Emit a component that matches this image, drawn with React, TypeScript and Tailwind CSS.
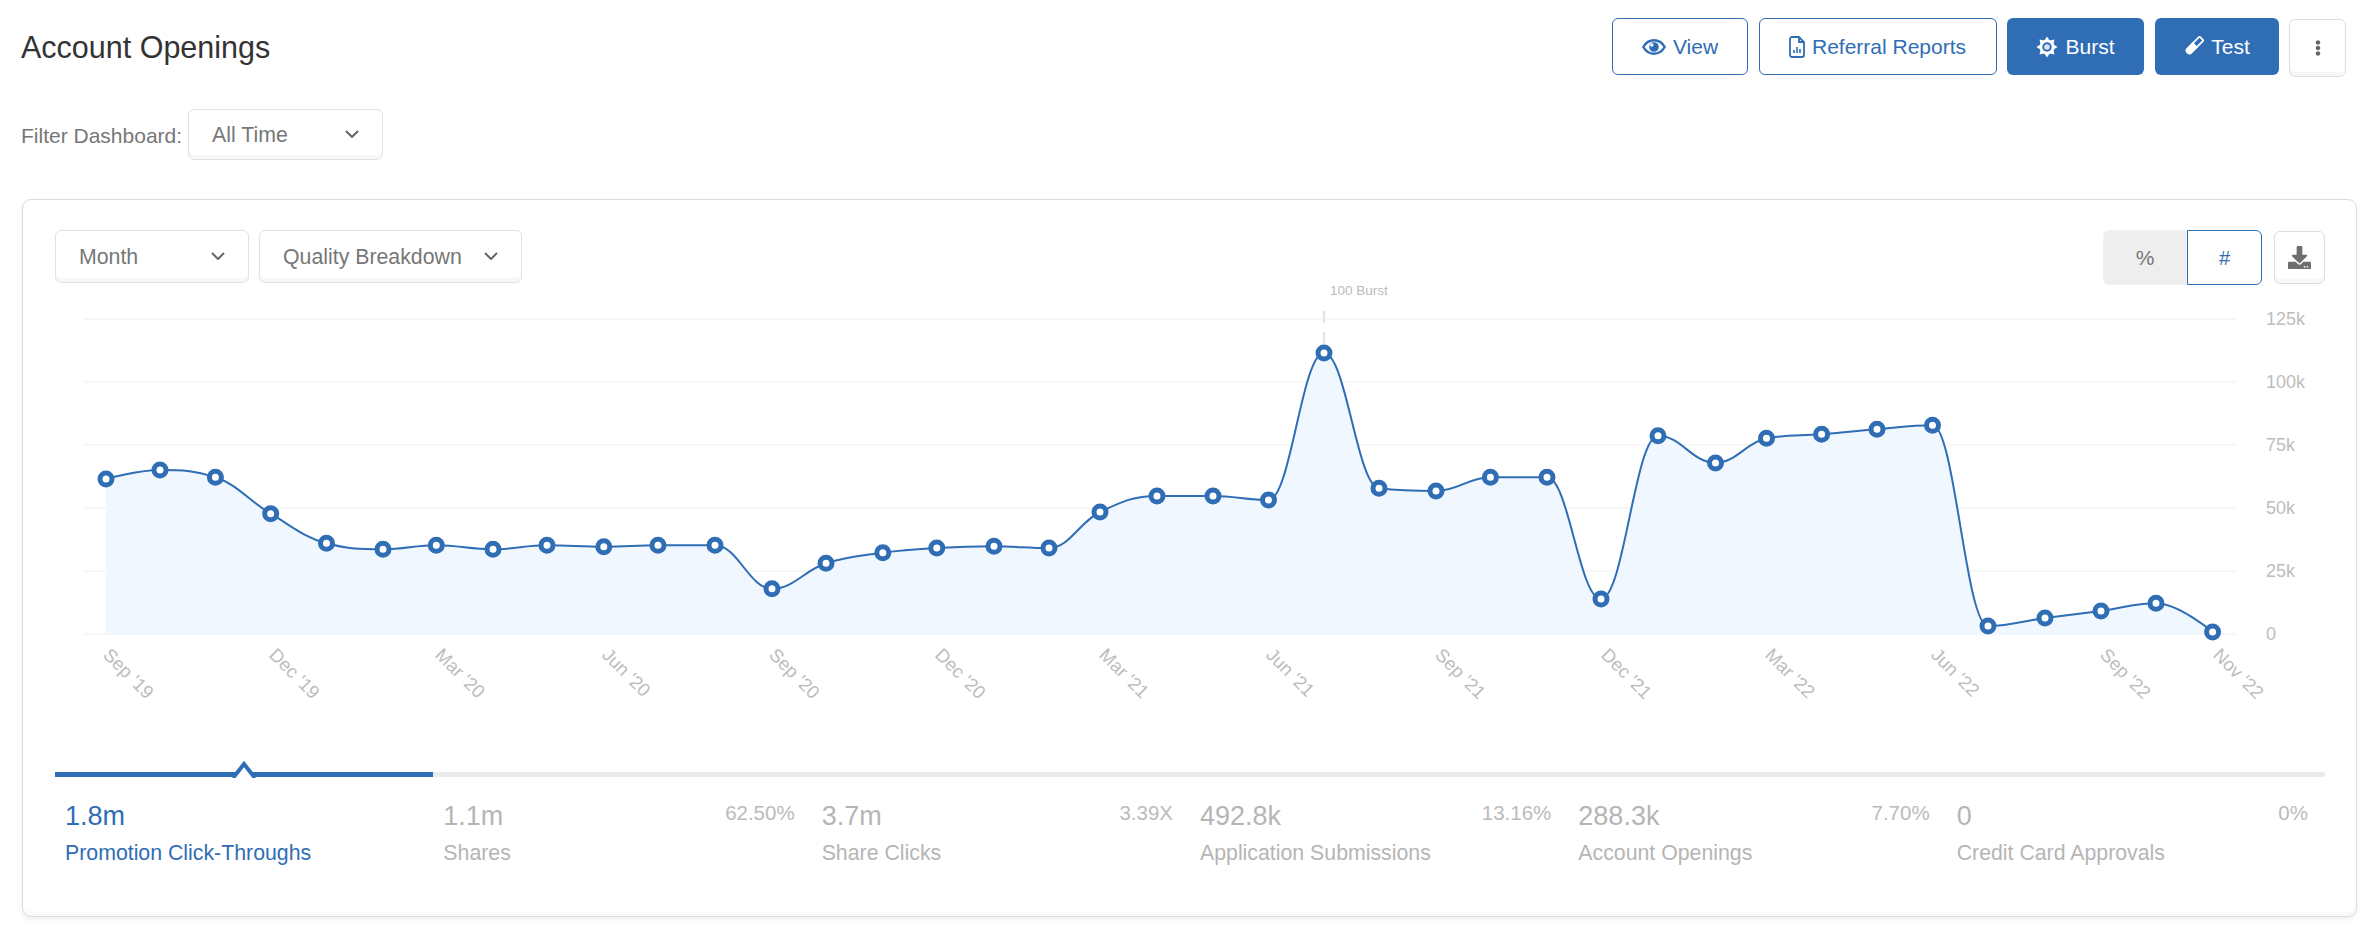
import { FaEllipsisV, FaDownload } from "react-icons/fa"

const BLUE = "#2f6db5"

const points: [number, number][] = [
    [106, 478], [160, 469], [215.4, 476.3], [270.7, 512.7], [326.5, 542.3], [383, 548.3],
    [436.3, 544.3], [493, 548.3], [547, 544.3], [603.8, 545.7], [658, 544.3], [715, 544.3],
    [772, 587.7], [826, 562.3], [882.8, 551.7], [936.8, 547], [994, 545.3], [1049, 547],
    [1100, 511], [1157, 495], [1213, 495], [1268.5, 499], [1324, 352], [1379, 487.3],
    [1436, 490], [1490.4, 476.3], [1547, 476.3], [1601, 598], [1658, 434.7], [1715.5, 462],
    [1766.5, 437.3], [1821.6, 433.3], [1877, 428.3], [1932.5, 424.3], [1988, 625], [2045, 617],
    [2101, 610], [2156, 602.3], [2212.6, 631],
]

const gridLines = [
    { y: 318, label: "125k" },
    { y: 381, label: "100k" },
    { y: 444, label: "75k" },
    { y: 507, label: "50k" },
    { y: 570, label: "25k" },
    { y: 633, label: "0" },
]

const xLabels: [number, string][] = [
    [102, "Sep '19"], [268, "Dec '19"], [434, "Mar '20"], [601, "Jun '20"], [768, "Sep '20"],
    [934, "Dec '20"], [1098, "Mar '21"], [1265, "Jun '21"], [1434, "Sep '21"], [1600, "Dec '21"],
    [1764, "Mar '22"], [1930, "Jun '22"], [2099, "Sep '22"], [2212, "Nov '22"],
]

const stats = [
    { value: "1.8m", label: "Promotion Click-Throughs", pct: "", active: true },
    { value: "1.1m", label: "Shares", pct: "62.50%" },
    { value: "3.7m", label: "Share Clicks", pct: "3.39X" },
    { value: "492.8k", label: "Application Submissions", pct: "13.16%" },
    { value: "288.3k", label: "Account Openings", pct: "7.70%" },
    { value: "0", label: "Credit Card Approvals", pct: "0%" },
]

const sunSpikes = [0, 45, 90, 135, 180, 225, 270, 315]

// same control point maths as a highcharts spline, clamps so peaks don't overshoot
function splinePath(pts: [number, number][]) {
    const s = 1.5
    const d = 2.5
    const conts = pts.map(([x, y], i) => {
        if (i === 0 || i === pts.length - 1) return { lx: x, ly: y, rx: x, ry: y }
        const [px, py] = pts[i - 1]
        const [nx, ny] = pts[i + 1]
        const lx = (s * x + px) / d
        let ly = (s * y + py) / d
        const rx = (s * x + nx) / d
        let ry = (s * y + ny) / d
        const c = ((ry - ly) * (rx - x)) / (rx - lx) + y - ry
        ly += c
        ry += c
        if (ly > py && ly > y) {
            ly = Math.max(py, y)
            ry = 2 * y - ly
        } else if (ly < py && ly < y) {
            ly = Math.min(py, y)
            ry = 2 * y - ly
        }
        if (ry > ny && ry > y) {
            ry = Math.max(ny, y)
            ly = 2 * y - ry
        } else if (ry < ny && ry < y) {
            ry = Math.min(ny, y)
            ly = 2 * y - ry
        }
        return { lx, ly, rx, ry }
    })
    let path = `M ${pts[0][0]} ${pts[0][1]}`
    for (let i = 1; i < pts.length; i++) {
        const a = conts[i - 1]
        const b = conts[i]
        path += ` C ${a.rx} ${a.ry} ${b.lx} ${b.ly} ${pts[i][0]} ${pts[i][1]}`
    }
    return path
}

function Chevron() {
    return (
        <svg viewBox="0 0 14 8" className="w-[14px] h-[8px] -mt-[2px]" fill="none" stroke="#666" strokeWidth="2">
            <path d="M1 1l6 6 6-6" />
        </svg>
    )
}

function Select({ label, className }: { label: string; className: string }) {
    return (
        <div className={`flex items-center justify-between bg-white border border-[#e2e2e2] rounded-[6px] shadow-[inset_0_-4px_0_#f7f7f7] pl-[23px] pr-[23px] text-[21.3px] text-[#777] ${className}`}>
            <span className="pt-[2px]">{label}</span>
            <Chevron />
        </div>
    )
}

function EyeIcon() {
    return (
        <svg viewBox="0 0 24 16" className="w-[24px] h-[16px]">
            <path d="M1.3 8C3.6 3.9 7.5 1.3 12 1.3S20.4 3.9 22.7 8C20.4 12.1 16.5 14.7 12 14.7S3.6 12.1 1.3 8z" fill="none" stroke={BLUE} strokeWidth="2.4" />
            <circle cx="12" cy="8" r="4.8" fill={BLUE} />
            <circle cx="9.8" cy="6" r="1.7" fill="#fff" />
        </svg>
    )
}

function ReportIcon() {
    return (
        <svg viewBox="0 0 16 22" className="w-[16px] h-[22px]" fill="none" stroke={BLUE} strokeWidth="1.8">
            <path d="M3 1h7l5 5v13a2 2 0 0 1-2 2H3a2 2 0 0 1-2-2V3a2 2 0 0 1 2-2z" />
            <path d="M10 1v5h5" />
            <path d="M5 17v-3M8 17v-6M11 17v-4" strokeWidth="1.6" />
        </svg>
    )
}

function SunIcon() {
    return (
        <svg viewBox="0 0 24 24" className="w-[22px] h-[22px]">
            {sunSpikes.map(a => (
                <path key={a} d="M12 0.5l3.2 5h-6.4z" fill="#fff" transform={`rotate(${a} 12 12)`} />
            ))}
            <circle cx="12" cy="12" r="8" fill="#fff" />
            <circle cx="12" cy="12" r="5.2" fill={BLUE} />
            <circle cx="12" cy="12" r="3" fill="#dbe6f3" />
        </svg>
    )
}

function TubeIcon() {
    return (
        <svg viewBox="0 0 24 24" className="w-[21px] h-[21px]">
            <g transform="rotate(45 12 12)">
                <path d="M8.5 -1h7" stroke="#fff" strokeWidth="2" />
                <path d="M8.8 -1v19.5a3.2 3.2 0 0 0 6.4 0V-1" fill="none" stroke="#fff" strokeWidth="2" />
                <path d="M7.8 9h8.4v9.5a4.2 4.2 0 0 1-8.4 0z" fill="#fff" />
            </g>
        </svg>
    )
}

export default function App() {
    const line = splinePath(points)
    const last = points[points.length - 1]
    const area = `${line} L ${last[0]} 634 L ${points[0][0]} 634 Z`

    return (
        <div className="w-[2378px] min-h-[938px] bg-white font-['Liberation_Sans',Arial,sans-serif]">
            <div className="flex items-start justify-between pl-[21px] pr-[32px] pt-[18px]">
                <h1 className="text-[30.5px] leading-[58px] text-[#333]">Account Openings</h1>
                <div className="flex gap-[10.5px] text-[21px]">
                    <button className="w-[136px] h-[57px] flex items-center justify-center gap-[7px] border border-[#2f6db5] rounded-[6px] text-[#2f6db5]">
                        <EyeIcon />
                        View
                    </button>
                    <button className="w-[238px] h-[57px] flex items-center justify-center gap-[7px] border border-[#2f6db5] rounded-[6px] text-[#2f6db5]">
                        <ReportIcon />
                        Referral Reports
                    </button>
                    <button className="w-[137px] h-[57px] flex items-center justify-center gap-[7px] bg-[#2f6db5] rounded-[6px] text-white">
                        <SunIcon />
                        Burst
                    </button>
                    <button className="w-[124px] h-[57px] flex items-center justify-center gap-[7px] bg-[#2f6db5] rounded-[6px] text-white">
                        <TubeIcon />
                        Test
                    </button>
                    <button className="w-[57px] h-[58px] mt-px flex items-center justify-center border border-[#ddd] rounded-[6px] shadow-[inset_0_-4px_0_#f7f7f7] text-[#666]">
                        <FaEllipsisV className="w-[16px] h-[16px]" />
                    </button>
                </div>
            </div>

            <div className="flex items-center gap-[6px] pl-[21px] mt-[32px] text-[21px] text-[#777]">
                <span className="pt-[2px]">Filter Dashboard:</span>
                <Select label="All Time" className="w-[195px] h-[51px]" />
            </div>

            <div className="mx-[22px] mt-[39px] h-[718px] w-[2335px] border border-[#dcdcdc] rounded-[9px] shadow-[0_3px_6px_rgba(0,0,0,0.06),inset_0_-4px_0_#fafafa] pl-[32px] pr-[31px] pt-[30px]">
                <div className="flex items-start justify-between h-[55px]">
                    <div className="flex gap-[10px]">
                        <Select label="Month" className="w-[194px] h-[53px]" />
                        <Select label="Quality Breakdown" className="w-[263px] h-[53px]" />
                    </div>
                    <div className="flex items-start gap-[12px]">
                        <div className="flex h-[55px] text-[21px]">
                            <div className="w-[84px] flex items-center justify-center bg-[#eee] border border-[#f2f2f2] rounded-l-[6px] text-[#777]">%</div>
                            <div className="w-[75px] flex items-center justify-center border border-[#2f6db5] rounded-r-[6px] text-[#2f6db5] text-[20px]">#</div>
                        </div>
                        <button className="w-[51px] h-[53px] mt-px flex items-center justify-center border border-[#ddd] rounded-[6px] shadow-[inset_0_-4px_0_#f7f7f7] text-[#6e6e6e]">
                            <FaDownload className="w-[23px] h-[23px]" />
                        </button>
                    </div>
                </div>

                <svg viewBox="55 284 2270 487" className="block w-[2270px] h-[487px] overflow-visible">
                    {gridLines.map(g => (
                        <g key={g.y}>
                            <line x1="84" x2="2236" y1={g.y} y2={g.y} stroke="#f5f5f5" strokeWidth="1.5" />
                            <text x="2266" y={g.y + 6} fontSize="18" fill="#bdbdbd">{g.label}</text>
                        </g>
                    ))}
                    <path d={area} fill="#f1f7fe" />
                    <line x1="1324" x2="1324" y1="310" y2="350" stroke="#e6e6e6" strokeWidth="2.5" strokeDasharray="12 9" />
                    <text x="1330" y="293.5" fontSize="13.5" fill="#bbb">100 Burst</text>
                    <path d={line} fill="none" stroke={BLUE} strokeWidth="2" />
                    {points.map(([x, y]) => (
                        <circle key={x} cx={x} cy={y} r="6" fill="#fff" stroke={BLUE} strokeWidth="5" />
                    ))}
                    {xLabels.map(([x, label]) => (
                        <text key={label} x={x} y={655} fontSize="18.5" fill="#bdbdbd" transform={`rotate(45 ${x} 655)`}>{label}</text>
                    ))}
                </svg>

                <div className="grid grid-cols-6">
                    {stats.map(s => (
                        <div key={s.label} className={`relative border-t-[5px] pl-[10px] pr-[17px] pt-[24px] ${s.active ? "border-[#2f6db5]" : "border-[#ebebeb]"}`}>
                            {s.active && (
                                <svg viewBox="0 0 24 17" className="absolute left-[177px] top-[-16px] w-[24px] h-[17px]" fill="#fff" stroke={BLUE} strokeWidth="4">
                                    <path d="M1 17L12 3l11 14" />
                                </svg>
                            )}
                            <div className="flex items-start justify-between">
                                <span className={`text-[27px] leading-[31px] ${s.active ? "text-[#2f6db5]" : "text-[#b5b5b5]"}`}>{s.value}</span>
                                <span className="text-[20.5px] leading-[23px] text-[#bbb]">{s.pct}</span>
                            </div>
                            <div className={`mt-[9px] text-[21.3px] leading-[24px] ${s.active ? "text-[#2f6db5]" : "text-[#b5b5b5]"}`}>{s.label}</div>
                        </div>
                    ))}
                </div>
            </div>
        </div>
    )
}
